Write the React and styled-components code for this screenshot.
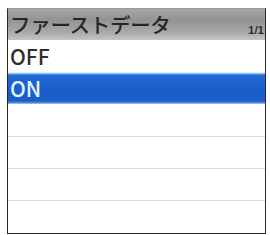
import React from "react";
import styled, { createGlobalStyle } from "styled-components";

const Global = createGlobalStyle`
  html, body { margin: 0; padding: 0; background: #fff; }
  body { width: 270px; height: 235px; overflow: hidden; }
`;

const Page = styled.div`
  width: 270px;
  height: 235px;
  padding: 8px 4px 1px 7px;
  box-sizing: border-box;
  background: #fff;
`;

const Screen = styled.div`
  height: 100%;
  border: 1.5px solid #2a2a2a;
  border-top-color: #9a9a9a;
  box-sizing: border-box;
  display: flex;
  flex-direction: column;
  font-family: "Noto Sans CJK JP", "Noto Sans", sans-serif;
  overflow: hidden;
`;

const Header = styled.div`
  height: 31px;
  flex: none;
  display: flex;
  align-items: flex-end;
  justify-content: space-between;
  padding: 0 1px 0 2px;
  background: linear-gradient(#a6a6a6 0%, #939393 35%, #a9a9a9 75%, #c4c4c4 100%);
`;

const Title = styled.div`
  font-size: 20.5px;
  line-height: 31px;
  color: #262626;
  letter-spacing: -0.3px;
  font-weight: 500;
`;

const Page11 = styled.div`
  font-family: "Liberation Sans", sans-serif;
  font-weight: bold;
  font-size: 11.5px;
  color: #303030;
  padding-bottom: 4px;
`;

const Row = styled.div`
  height: 32.2px;
  flex: none;
  box-sizing: border-box;
  display: flex;
  align-items: center;
  padding-left: 2px;
  font-size: 21px;
  font-weight: 500;
  border-bottom: ${p => (p.$line ? "1.5px solid #dcdcdc" : "none")};
  color: ${p => (p.$selected ? "#e2f6ff" : "#2e2e2e")};
  background: ${p =>
    p.$selected
      ? "linear-gradient(#f4fbff 0px, #bfe4ff 1px, #5fa2ea 2px, #2168d4 3.5px, #1b5fcd 50%, #1a5cc8 90%, #5a8fdc 97%, #cfe0f6 100%)"
      : "#fff"};
`;

const items = [
  { label: "OFF", line: false },
  { label: "ON", selected: true },
  { label: "", line: true },
  { label: "", line: true },
  { label: "", line: true },
  { label: "" },
];

export default function App() {
  return (
    <>
      <Global />
      <Page>
        <Screen>
          <Header>
            <Title>ファーストデータ</Title>
            <Page11>1/1</Page11>
          </Header>
          {items.map((it, i) => (
            <Row key={i} $selected={it.selected} $line={it.line}>
              {it.label}
            </Row>
          ))}
        </Screen>
      </Page>
    </>
  );
}
